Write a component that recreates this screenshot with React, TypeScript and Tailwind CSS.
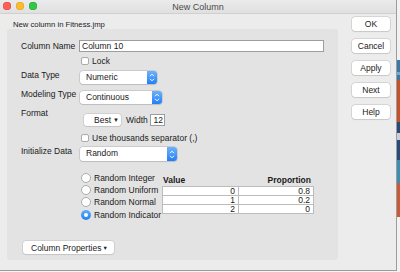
import React from "react";

function Stepper() {
  return (
    <span className="flex h-full w-[10px] items-center justify-center rounded-r-[3px] bg-gradient-to-b from-[#6cb2fb] to-[#1f7ff5]">
      <svg width="8" height="11" viewBox="0 0 8 11" fill="none">
        <path d="M2 4.2 L4 2.2 L6 4.2" stroke="white" strokeWidth="1" />
        <path d="M2 6.8 L4 8.8 L6 6.8" stroke="white" strokeWidth="1" />
      </svg>
    </span>
  );
}

function Select({ label, className }: { label: string; className: string }) {
  return (
    <div
      className={
        "flex rounded-[3px] bg-white shadow-[0_0_0_0.5px_#b4b4b4,0_1px_1px_rgba(0,0,0,0.12)] " +
        className
      }
    >
      <span className="flex-1 pl-[6px] text-[8.5px] leading-[13px] text-[#1a1a1a]">{label}</span>
      <Stepper />
    </div>
  );
}

function Checkbox() {
  return (
    <span className="h-[8px] w-[8px] rounded-[2px] border border-[#ababab] bg-white shadow-[inset_0_0.5px_0.5px_rgba(0,0,0,0.06)]" />
  );
}

function Radio({ label, selected }: { label: string; selected?: boolean }) {
  return (
    <div className="flex h-[12px] items-center">
      {selected ? (
        <span className="flex h-[10px] w-[10px] items-center justify-center rounded-full bg-gradient-to-b from-[#5eaefb] to-[#1e7ff5]">
          <span className="h-[4px] w-[4px] rounded-full bg-white" />
        </span>
      ) : (
        <span className="h-[10px] w-[10px] rounded-full border border-[#ababab] bg-white" />
      )}
      <span className="ml-[3px] text-[8.5px] leading-[10px] text-[#1a1a1a]">{label}</span>
    </div>
  );
}

function Btn({ label }: { label: string }) {
  return (
    <div className="flex h-[14px] w-[38px] items-center justify-center rounded-[3px] bg-white text-[8.5px] text-[#1a1a1a] shadow-[0_0_0_0.5px_#bdbdbd,0_1px_1px_rgba(0,0,0,0.1)]">
      {label}
    </div>
  );
}

function Cell({ v }: { v: string }) {
  return (
    <div className="-mt-[1px] h-[10px] border border-[#bcbcbc] bg-white pr-[3px] text-right text-[8.5px] leading-[8px] text-[#1a1a1a]">
      {v}
    </div>
  );
}

export default function App() {
  return (
    <div className="flex h-[272px] w-[400px] overflow-hidden bg-[#f4f4f4] font-['Liberation_Sans',Arial,sans-serif]">
      {/* Window */}
      <div className="flex h-[271px] w-[397px] flex-col border-b border-r border-[#9c9c9c] bg-[#ececec]">
        {/* Title bar */}
        <div className="relative flex h-[14px] items-center justify-center border-b border-[#d0d0d0] bg-gradient-to-b from-[#ebebeb] to-[#e0e0e0]">
          <div className="absolute left-[3px] top-[2px] flex gap-[5px]">
            <span className="h-[8px] w-[8px] rounded-full bg-[#fc5f57] shadow-[inset_0_0_0_0.5px_#de4a43]" />
            <span className="h-[8px] w-[8px] rounded-full bg-[#fdbc2e] shadow-[inset_0_0_0_0.5px_#dfa02a]" />
            <span className="h-[8px] w-[8px] rounded-full bg-[#33c748] shadow-[inset_0_0_0_0.5px_#27a83a]" />
          </div>
          <span className="text-[9px] leading-[10px] text-[#4a4a4a]">New Column</span>
        </div>

        {/* Body */}
        <div className="flex flex-1">
          {/* Left */}
          <div className="flex flex-col pl-[7px]">
            <div className="h-[15px] pl-[6px] pt-[6px] text-[7.7px] leading-[9px] text-[#1a1a1a]">
              New column in Fitness.jmp
            </div>
            <div className="flex h-[231px] w-[331px] flex-col rounded-[3px] bg-[#e3e3e3] pl-[14px] text-[8.5px] text-[#1a1a1a]">
              {/* Column Name */}
              <div className="mt-[11px] flex h-[12px] items-center">
                <span className="w-[58px] leading-[10px]">Column Name</span>
                <div className="h-[12px] w-[245px] border border-[#9d9d9d] bg-white pl-[2px] leading-[10px]">
                  Column 10
                </div>
              </div>
              {/* Lock */}
              <div className="ml-[60px] mt-[5px] flex h-[8px] items-center">
                <Checkbox />
                <span className="ml-[3px] leading-[10px]">Lock</span>
              </div>
              {/* Data Type */}
              <div className="mt-[6px] flex items-start">
                <span className="w-[59px] leading-[8px]">Data Type</span>
                <Select label="Numeric" className="h-[13px] w-[77px]" />
              </div>
              {/* Modeling Type */}
              <div className="mt-[7px] flex items-start">
                <span className="w-[59px] leading-[7px]">Modeling Type</span>
                <Select label="Continuous" className="h-[13px] w-[82px]" />
              </div>
              {/* Format */}
              <div className="mt-[5px] flex items-start">
                <span className="w-[58px] leading-[8px]">Format</span>
                <div className="ml-[5px] mt-[5px] flex items-center">
                  <div className="flex h-[12px] w-[37px] items-center rounded-[3px] bg-white pl-[10px] shadow-[0_0_0_0.5px_#bdbdbd,0_1px_1px_rgba(0,0,0,0.1)]">
                    <span className="leading-[10px]">Best</span>
                    <span className="ml-[2px] text-[6px] leading-[10px]">▼</span>
                  </div>
                  <span className="ml-[5px] w-[24px] leading-[10px]">Width</span>
                  <div className="h-[12px] w-[15px] border border-[#9d9d9d] bg-white pr-[1px] text-right leading-[10px]">
                    12
                  </div>
                </div>
              </div>
              {/* thousands */}
              <div className="ml-[60px] mt-[8px] flex h-[8px] items-center">
                <Checkbox />
                <span className="ml-[3px] leading-[10px]">Use thousands separator (,)</span>
              </div>
              {/* Initialize Data */}
              <div className="mt-[5px] flex items-start">
                <span className="w-[59px] leading-[8px]">Initialize Data</span>
                <Select label="Random" className="h-[14px] w-[97px]" />
              </div>
              {/* Radios + table */}
              <div className="ml-[60px] mt-[11px] flex">
                <div className="flex w-[81px] flex-col">
                  <Radio label="Random Integer" />
                  <Radio label="Random Uniform" />
                  <Radio label="Random Normal" />
                  <div className="mt-[1px]">
                    <Radio label="Random Indicator" selected />
                  </div>
                </div>
                <div className="flex flex-col">
                  <div className="mt-[4px] flex h-[8px] leading-[8px]">
                    <span className="w-[77px] pl-[1px] font-bold">Value</span>
                    <span className="w-[75px] pr-[3px] text-right font-bold">Proportion</span>
                  </div>
                  <div className="mt-[3px] flex">
                    <div className="flex w-[77px] flex-col">
                      <Cell v="0" />
                      <Cell v="1" />
                      <Cell v="2" />
                    </div>
                    <div className="-ml-[1px] flex w-[76px] flex-col">
                      <Cell v="0.8" />
                      <Cell v="0.2" />
                      <Cell v="0" />
                    </div>
                  </div>
                </div>
              </div>
              {/* Column Properties */}
              <div className="ml-[2px] mt-[20px] flex h-[13px] w-[91px] items-center rounded-[3px] bg-white pl-[8px] shadow-[0_0_0_0.5px_#bdbdbd,0_1px_1px_rgba(0,0,0,0.1)]">
                <span className="leading-[10px]">Column Properties</span>
                <span className="ml-[1px] text-[5.5px] leading-[10px]">▼</span>
              </div>
            </div>
          </div>
          {/* Right buttons */}
          <div className="ml-[14px] flex flex-col gap-[8px] pt-[3px]">
            <Btn label="OK" />
            <Btn label="Cancel" />
            <Btn label="Apply" />
            <Btn label="Next" />
            <Btn label="Help" />
          </div>
        </div>
      </div>
      {/* Background strip */}
      <div className="flex w-[3px] flex-col">
        <div className="h-[60px] bg-[#f2f2f2]" />
        <div className="h-[12px] bg-[#3a78a8]" />
        <div className="h-[3px] bg-[#7aa6c8]" />
        <div className="h-[5px] bg-[#3a78a8]" />
        <div className="h-[42px] bg-[#c5502a]" />
        <div className="h-[11px] bg-[#2a4a7a]" />
        <div className="h-[7px] bg-[#c8d0dc]" />
        <div className="h-[20px] bg-[#2a4a7a]" />
        <div className="h-[23px] bg-[#3a8fb5]" />
        <div className="h-[34px] bg-[#c95a3a]" />
        <div className="flex-1 bg-[#f2f2f2]" />
      </div>
    </div>
  );
}
